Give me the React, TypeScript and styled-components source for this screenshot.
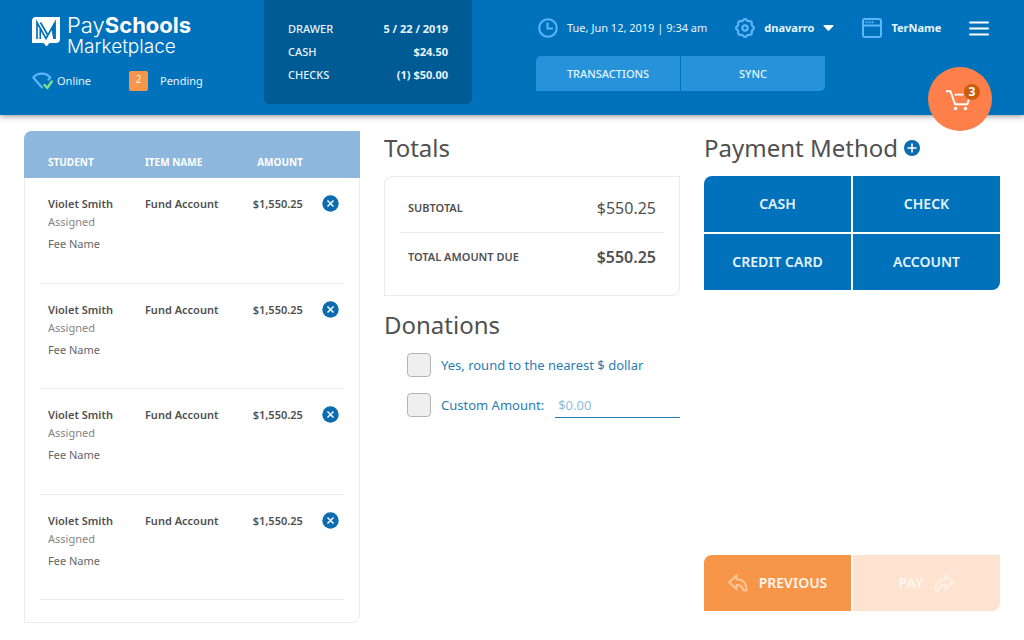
import React from "react";
import styled, { createGlobalStyle, css } from "styled-components";

const color = {
  blue: "#0072bb",
  blueDark: "#005b94",
  blueMid: "#2592da",
  blueSoft: "#8db7dc",
  icon: "#5db5fb",
  label: "#2b7cb3",
  text: "#505050",
  muted: "#858585",
  line: "#ebebeb",
  orange: "#f79548",
  orangePale: "#fde3d0",
  cart: "#ff7f4b",
  cartDark: "#cb5c0c",
};

const GlobalStyle = createGlobalStyle`
  *, *::before, *::after { box-sizing: border-box; }
  body {
    margin: 0;
    background: #fff;
    color: ${color.text};
    font-family: "Noto Sans", sans-serif;
    font-size: 11px;
    line-height: 18px;
  }
  button, input { font: inherit; color: inherit; }
  button { margin: 0; padding: 0; border: 0; background: none; cursor: pointer; }
  svg { display: block; flex: none; }
`;

const Page = styled.div`
  display: flex;
  flex-direction: column;
  min-height: 100vh;
`;

/* ---------- header ---------- */

const Header = styled.header`
  position: relative;
  display: flex;
  align-items: flex-start;
  height: 115px;
  padding: 0 32px 0 24px;
  background: ${color.blue};
  color: #e6f4ff;
  box-shadow: 0 1px 6px rgba(0, 0, 0, 0.45);
`;

const Brand = styled.div`
  flex: 0 0 240px;
  padding: 14px 0 0 8px;
`;

const Logo = styled.a`
  display: flex;
  align-items: flex-start;
  gap: 7px;
  color: #fff;
  text-decoration: none;
  font-family: Inter, sans-serif;
  font-weight: 300;
  line-height: 22px;
`;

const LogoText = styled.span`
  display: flex;
  flex-direction: column;
`;

const LogoTop = styled.span`
  font-size: 22px;

  b { font-weight: 700; }
`;

const LogoBottom = styled.span`
  font-size: 19px;
`;

const StatusRow = styled.div`
  display: flex;
  align-items: center;
  margin-top: 13px;
`;

const Status = styled.span`
  display: flex;
  align-items: center;
  width: 97px;
  gap: 4px;
`;

const Pending = styled(Status)`
  width: auto;
  gap: 12px;
`;

const PendingCount = styled.span`
  width: 19px;
  height: 20px;
  border-radius: 2px;
  background: ${color.orange};
  font-size: 10px;
  line-height: 17px;
  text-align: center;
`;

const Drawer = styled.dl`
  flex: 0 0 208px;
  display: flex;
  flex-direction: column;
  gap: 5px;
  height: 104px;
  margin: 0 64px 0 0;
  padding: 20px 24px;
  border-radius: 0 0 5px 5px;
  background: ${color.blueDark};
`;

const DrawerLine = styled.div`
  display: flex;
  justify-content: space-between;

  dt { font-weight: 500; }
  dd { margin: 0; font-weight: 700; }
`;

const Tools = styled.div`
  flex: 1;
  min-width: 0;
  padding-top: 16px;
`;

const ToolRow = styled.div`
  display: flex;
  align-items: center;
  gap: 28px;
  height: 24px;
  padding: 0 3px 0 2px;
`;

const toolItem = css`
  display: flex;
  align-items: center;
  gap: 9px;
  white-space: nowrap;
`;

const Tool = styled.span<{ $strong?: boolean }>`
  ${toolItem}
  font-weight: ${(p) => (p.$strong ? 700 : 400)};
`;

const UserButton = styled.button`
  ${toolItem}
  font-weight: 700;
`;

const MenuButton = styled.button`
  margin: 0 0 0 auto;
  padding-right: 8px;
`;

const Tabs = styled.nav`
  display: grid;
  grid-template-columns: 144px 144px;
  gap: 1px;
  margin-top: 16px;
`;

const Tab = styled.button`
  height: 35px;
  background: ${color.blueMid};
  font-weight: 500;

  &:first-child { border-top-left-radius: 5px; }
  &:last-child { border-bottom-right-radius: 5px; }
`;

const CartButton = styled.button`
  position: absolute;
  right: 32px;
  bottom: -16px;
  width: 64px;
  height: 64px;
  padding-left: 17px;
  border-radius: 50%;
  background: ${color.cart};
  color: #fff;
`;

const CartCount = styled.span`
  position: absolute;
  top: 17px;
  right: 12px;
  width: 16px;
  height: 16px;
  border-radius: 50%;
  background: ${color.cartDark};
  font-size: 12px;
  font-weight: 700;
  line-height: 16px;
  text-align: center;
`;

/* ---------- main ---------- */

const Main = styled.main`
  flex: 1;
  display: grid;
  grid-template-columns: minmax(0, 336fr) minmax(0, 296fr) minmax(0, 296fr);
  gap: 24px;
  padding: 16px 24px 17px;
`;

const Card = styled.div`
  border-radius: 8px 0 8px 0;
  box-shadow: inset 0 0 0 1px ${color.line};
  overflow: hidden;
`;

const Column = styled.section`
  display: flex;
  flex-direction: column;
`;

const Title = styled.h2`
  display: flex;
  align-items: center;
  gap: 6px;
  margin: 0 0 12px;
  font-size: 24px;
  font-weight: 400;
  line-height: 33px;
  white-space: nowrap;
`;

const ItemTable = styled.table`
  width: 100%;
  height: 469px;
  border-collapse: collapse;
  table-layout: fixed;

  col:nth-child(1) { width: 36%; }
  col:nth-child(2) { width: 26%; }
  col:nth-child(3) { width: 21%; }

  th, td { padding: 0; text-align: left; vertical-align: top; }
  th:first-child, td:first-child { padding-left: 24px; }
  th:nth-child(3), td:nth-child(3) { text-align: right; }
`;

const HeadRow = styled.tr`
  height: 47px;
  background: ${color.blueSoft};
  color: #fff;
  font-size: 10px;
  font-weight: 600;

  th { padding-top: 22px; }
`;

const ItemRow = styled.tr`
  background: linear-gradient(${color.line}, ${color.line}) no-repeat 16px bottom / calc(100% - 32px) 1px;

  td { padding-top: 17px; font-weight: 600; }
  td:last-child { padding-left: 19px; }
`;

const Detail = styled.div<{ $muted?: boolean }>`
  margin-top: ${(p) => (p.$muted ? 0 : 4)}px;
  color: ${(p) => (p.$muted ? color.muted : "#666")};
  font-weight: 400;
`;

const TotalsCard = styled(Card)`
  margin: 0 0 12px;
  padding: 8px 16px 16px;
`;

const TotalLine = styled.div<{ $strong?: boolean }>`
  display: flex;
  align-items: center;
  justify-content: space-between;
  height: 48px;
  padding: 0 8px;

  & + & { border-top: 1px solid ${color.line}; }

  dt { font-weight: 600; }
  dd {
    margin: 0;
    font-size: 16px;
    font-weight: ${(p) => (p.$strong ? 600 : 400)};
  }
`;

const TotalsList = styled.dl`
  margin: 0;
`;

const Options = styled.div`
  display: flex;
  flex-direction: column;
  gap: 16px;
  padding-left: 23px;
  color: ${color.label};
  font-size: 13px;
`;

const Option = styled.div`
  display: flex;
  align-items: center;
  height: 24px;
  white-space: nowrap;
`;

const OptionLabel = styled.label`
  display: flex;
  align-items: center;
  gap: 10px;
  cursor: pointer;
`;

const Tick = styled.input`
  appearance: none;
  width: 24px;
  height: 24px;
  margin: 0;
  border: 1px solid #b4b4b4;
  border-radius: 4px;
  background: #efefef;

  &:checked { background: ${color.label}; }
`;

const AmountInput = styled.input`
  flex: 1;
  min-width: 0;
  height: 26px;
  margin-left: 11px;
  padding: 0 3px;
  border: 0;
  border-bottom: 1px solid ${color.label};
  background: none;
  outline: none;

  &::placeholder { color: #93bbd9; opacity: 1; }
`;

const ButtonGrid = styled.div<{ $bottom?: boolean }>`
  display: grid;
  grid-template-columns: 1fr 1fr;
  gap: 2px;
  margin: ${(p) => (p.$bottom ? "auto 0 12px" : "0")};
  border-radius: 8px 0 8px 0;
  overflow: hidden;
`;

const BigButton = styled.button<{ $tone?: "orange" | "pale" }>`
  display: flex;
  align-items: center;
  justify-content: center;
  gap: 11px;
  height: 56px;
  background: ${(p) =>
    p.$tone === "orange" ? color.orange : p.$tone === "pale" ? color.orangePale : color.blue};
  color: ${(p) => (p.$tone ? "#fff6ee" : "#e6f4ff")};
  font-size: 14px;
  font-weight: 600;
`;

/* ---------- icons ---------- */

const LogoMark = () => (
  <svg width="28" height="36" viewBox="0 0 28 36" aria-hidden="true">
    <path d="M4 3h24v22a4 4 0 0 1-4 4h-6.500l-3 3.500-3-3.500H0V7a4 4 0 0 1 4-4z" fill="#fff" />
    <path d="M5 25V8.500L14 24.500l9-16V25M8.500 8.500l7.500 13M8.300 25V15" fill="none" stroke={color.blue} strokeWidth="1.700" />
    <path d="M19.500 15.500L23.500 8.500V25h-2.300z" fill={color.blue} />
  </svg>
);

const OnlineIcon = () => (
  <svg width="21" height="18" viewBox="0 0 21 18" fill="none" strokeLinejoin="round" strokeLinecap="round" aria-hidden="true">
    <path d="M10 15.500L1.300 5.500C3.500 2.700 6.300 1.600 9.800 1.600s6.300 1.100 8.500 3.900l-1.800 2.200" stroke={color.icon} strokeWidth="2.200" />
    <path d="M12.500 13l2.700 3 4.600-6.500" stroke="#7fe08a" strokeWidth="2.400" />
  </svg>
);

const ClockIcon = () => (
  <svg width="20" height="20" viewBox="0 0 20 20" fill="none" stroke={color.icon} strokeWidth="2" aria-hidden="true">
    <circle cx="10" cy="10" r="8.800" />
    <path d="M9.500 4.500v6H15" />
  </svg>
);

/* Eight-lobed outline of the gear, sampled round the circle. */
const gearOutline = Array.from({ length: 96 }, (_, i) => {
  const angle = (i / 96) * Math.PI * 2;
  const radius = 8.2 + 0.7 * Math.cos(angle * 8);
  return `${(10 + radius * Math.cos(angle)).toFixed(2)},${(10 + radius * Math.sin(angle)).toFixed(2)}`;
}).join(" ");

const GearIcon = () => (
  <svg width="20" height="20" viewBox="0 0 20 20" fill="none" stroke={color.icon} strokeWidth="2.200" strokeLinejoin="round" aria-hidden="true">
    <polygon points={gearOutline} />
    <circle cx="10" cy="10" r="2.700" />
  </svg>
);

const WindowIcon = () => (
  <svg width="20" height="20" viewBox="0 0 20 20" fill="none" stroke={color.icon} strokeWidth="2" aria-hidden="true">
    <rect x="1" y="1" width="18" height="18" rx="2" />
    <path d="M1 7.500h18" />
    <path d="M3.500 4.200h9" strokeDasharray="1.800 1.200" />
  </svg>
);

const CaretIcon = () => (
  <svg width="11" height="6" viewBox="0 0 11 6" fill="#fff" aria-hidden="true">
    <path d="M1 0h9a.6.6 0 0 1 .4 1L6.200 5.400a1 1 0 0 1-1.400 0L.6 1A.6.6 0 0 1 1 0z" />
  </svg>
);

const MenuIcon = () => (
  <svg width="20" height="15" viewBox="0 0 20 15" stroke="#fff" strokeWidth="2" strokeLinecap="round" aria-hidden="true">
    <path d="M1 1.500h18M1 7.500h18M1 13.500h18" />
  </svg>
);

const CartIcon = () => (
  <svg width="28" height="26" viewBox="0 0 28 26" fill="none" stroke="#fff" strokeWidth="1.900" strokeLinejoin="round" aria-hidden="true">
    <path d="M1 5.200h4.500l4.500 13h12.300l2.700-8M9.500 8.600h9" />
    <circle cx="10.500" cy="22.500" r="1.800" fill="#fff" stroke="none" />
    <circle cx="20.500" cy="22.500" r="1.800" fill="#fff" stroke="none" />
  </svg>
);

const RemoveIcon = () => (
  <svg width="17" height="17" viewBox="0 0 17 17" aria-hidden="true">
    <circle cx="8.500" cy="8.500" r="8.200" fill="#0b6db0" />
    <path d="M5.500 5.500l6 6M11.500 5.500l-6 6" stroke="#fff" strokeWidth="1.500" />
  </svg>
);

const AddIcon = () => (
  <svg width="16" height="16" viewBox="0 0 16 16" aria-hidden="true">
    <circle cx="8" cy="8" r="8" fill="#0b6db0" />
    <path d="M8 3.500v9M3.500 8h9" stroke="#fff" strokeWidth="1.600" />
  </svg>
);

const ReplyIcon = ({ forward = false }: { forward?: boolean }) => (
  <svg width="20" height="18" viewBox="0 0 20 18" fill="none" stroke={forward ? "#fff1e6" : "#fcc797"} strokeWidth="2" strokeLinejoin="round" aria-hidden="true">
    <path
      d={
        forward
          ? "M11.500 1.200l7.300 7-7.300 7v-4.200c-4-.2-6.200 1.300-7 5.500H1.500C1.200 9.500 4.500 5.500 11.500 5.300z"
          : "M8.500 1.200l-7.300 7 7.300 7v-4.200c4-.2 6.200 1.300 7 5.500h3C18.800 9.500 15.500 5.500 8.500 5.300z"
      }
    />
  </svg>
);

/* ---------- data ---------- */

const items = [1, 2, 3, 4].map((id) => ({
  id,
  student: "Violet Smith",
  status: "Assigned",
  fee: "Fee Name",
  name: "Fund Account",
  amount: "$1,550.25",
}));

const methods = ["CASH", "CHECK", "CREDIT CARD", "ACCOUNT"];

export default function App() {
  return (
    <Page>
      <GlobalStyle />
      <Header>
        <Brand>
          <Logo href="#">
            <LogoMark />
            <LogoText>
              <LogoTop>
                Pay<b>Schools</b>
              </LogoTop>
              <LogoBottom>Marketplace</LogoBottom>
            </LogoText>
          </Logo>
          <StatusRow>
            <Status>
              <OnlineIcon />
              Online
            </Status>
            <Pending>
              <PendingCount>2</PendingCount>
              Pending
            </Pending>
          </StatusRow>
        </Brand>
        <Drawer>
          <DrawerLine>
            <dt>DRAWER</dt>
            <dd>5 / 22 / 2019</dd>
          </DrawerLine>
          <DrawerLine>
            <dt>CASH</dt>
            <dd>$24.50</dd>
          </DrawerLine>
          <DrawerLine>
            <dt>CHECKS</dt>
            <dd>(1) $50.00</dd>
          </DrawerLine>
        </Drawer>
        <Tools>
          <ToolRow>
            <Tool>
              <ClockIcon />
              Tue, Jun 12, 2019 | 9:34 am
            </Tool>
            <UserButton type="button">
              <GearIcon />
              dnavarro
              <CaretIcon />
            </UserButton>
            <Tool $strong>
              <WindowIcon />
              TerName
            </Tool>
            <MenuButton type="button" aria-label="Menu">
              <MenuIcon />
            </MenuButton>
          </ToolRow>
          <Tabs>
            <Tab type="button">TRANSACTIONS</Tab>
            <Tab type="button">SYNC</Tab>
          </Tabs>
        </Tools>
        <CartButton type="button" aria-label="Cart">
          <CartIcon />
          <CartCount>3</CartCount>
        </CartButton>
      </Header>

      <Main>
        <Card>
          <ItemTable>
            <colgroup>
              <col />
              <col />
              <col />
              <col />
            </colgroup>
            <thead>
              <HeadRow>
                <th>STUDENT</th>
                <th>ITEM NAME</th>
                <th>AMOUNT</th>
                <th aria-label="Remove" />
              </HeadRow>
            </thead>
            <tbody>
              {items.map((item) => (
                <ItemRow key={item.id}>
                  <td>
                    {item.student}
                    <Detail $muted>{item.status}</Detail>
                    <Detail>{item.fee}</Detail>
                  </td>
                  <td>{item.name}</td>
                  <td>{item.amount}</td>
                  <td>
                    <button type="button" aria-label="Remove item">
                      <RemoveIcon />
                    </button>
                  </td>
                </ItemRow>
              ))}
            </tbody>
          </ItemTable>
        </Card>

        <Column>
          <Title>Totals</Title>
          <TotalsCard>
            <TotalsList>
              <TotalLine>
                <dt>SUBTOTAL</dt>
                <dd>$550.25</dd>
              </TotalLine>
              <TotalLine $strong>
                <dt>TOTAL AMOUNT DUE</dt>
                <dd>$550.25</dd>
              </TotalLine>
            </TotalsList>
          </TotalsCard>
          <Title>Donations</Title>
          <Options>
            <Option>
              <OptionLabel>
                <Tick type="checkbox" />
                Yes, round to the nearest $ dollar
              </OptionLabel>
            </Option>
            <Option>
              <OptionLabel>
                <Tick type="checkbox" />
                Custom Amount:
              </OptionLabel>
              <AmountInput type="text" placeholder="$0.00" aria-label="Custom amount" />
            </Option>
          </Options>
        </Column>

        <Column>
          <Title>
            Payment Method
            <button type="button" aria-label="Add payment method">
              <AddIcon />
            </button>
          </Title>
          <ButtonGrid>
            {methods.map((method) => (
              <BigButton key={method} type="button">
                {method}
              </BigButton>
            ))}
          </ButtonGrid>
          <ButtonGrid $bottom>
            <BigButton type="button" $tone="orange">
              <ReplyIcon />
              PREVIOUS
            </BigButton>
            <BigButton type="button" $tone="pale">
              PAY
              <ReplyIcon forward />
            </BigButton>
          </ButtonGrid>
        </Column>
      </Main>
    </Page>
  );
}
